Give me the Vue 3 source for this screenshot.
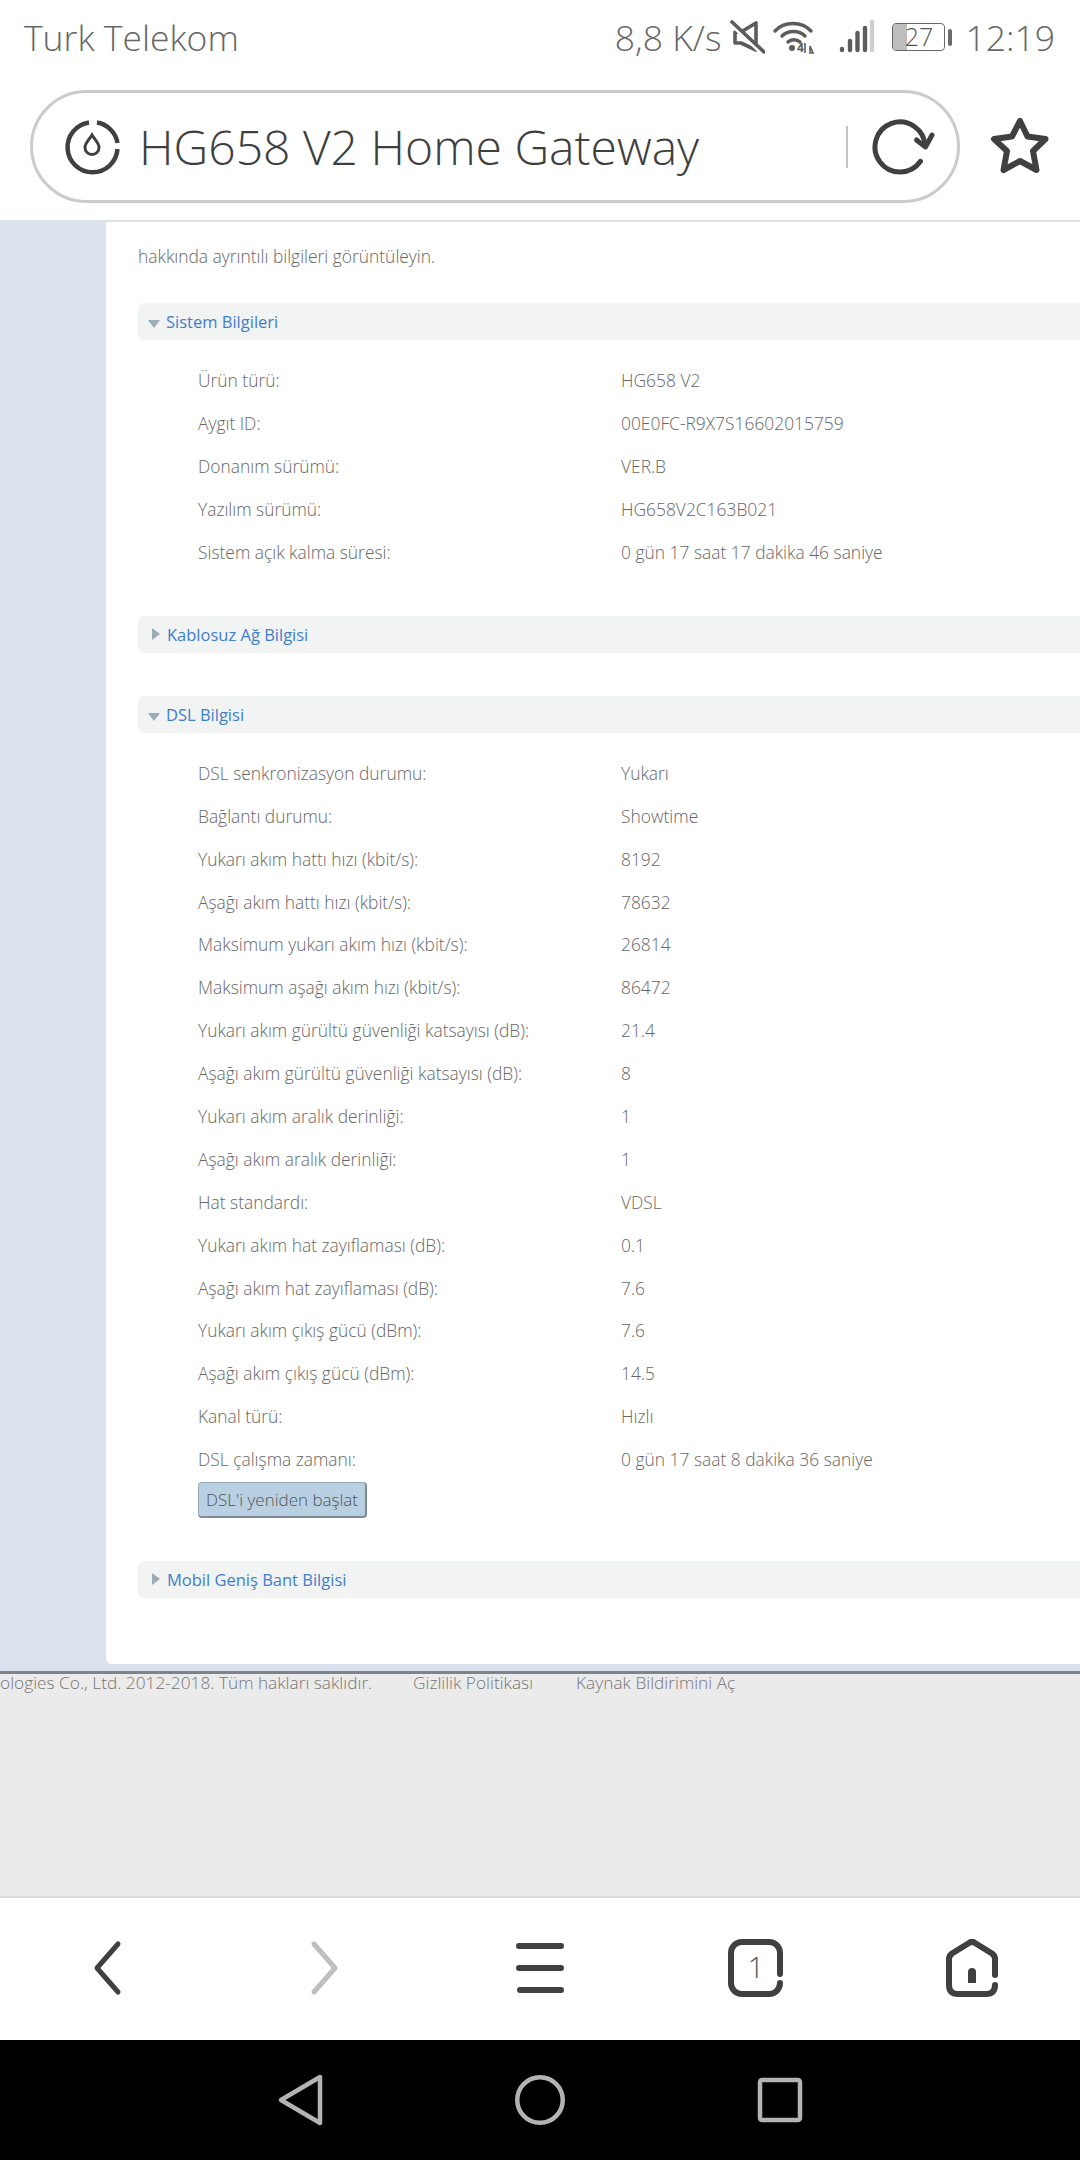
<template>
  <div class="phone">
    <div class="status-bar">
      <span class="carrier">Turk Telekom</span>
      <div class="status-right">
        <span class="speed">8,8 K/s</span>
        <svg class="ico-mute" width="36" height="36" viewBox="0 0 36 36" fill="none" stroke="#5c5c5c" stroke-width="3.6">
          <path d="M6 13h6l15-9v27L12 24H6z" stroke-linejoin="round" />
          <path d="M0 4l32 30" stroke="#fff" stroke-width="3" />
          <path d="M3 3l32 30" stroke-linecap="round" />
        </svg>
        <svg class="ico-wifi" width="42" height="34" viewBox="0 0 42 34" fill="none" stroke="#5c5c5c" stroke-width="3.4" stroke-linecap="round">
          <path d="M3 11C12 1 30 1 39 11" />
          <path d="M10 16c6-6 17-6 23 0" />
          <path d="M16 22c3-3 9-3 12 0" />
          <circle cx="20" cy="28" r="3" fill="#5c5c5c" stroke="none" />
          <text x="25" y="32" class="wifi-four">4</text>
          <path d="M33 23v10M38 26l3 7h-3z" stroke-width="1.6" stroke-linecap="butt" />
        </svg>
        <svg class="ico-signal" width="36" height="34" viewBox="0 0 36 34" stroke-linecap="round" stroke-width="4.4" fill="none">
          <path d="M3 30v-1" stroke="#5c5c5c" />
          <path d="M11 30v-9" stroke="#5c5c5c" />
          <path d="M18.5 30V13" stroke="#5c5c5c" />
          <path d="M26 30V8" stroke="#5c5c5c" />
          <path d="M33 30V2" stroke="#cfcfcf" />
        </svg>
        <div class="battery">
          <div class="battery-body">
            <div class="battery-fill" :style="{ width: batteryLevel + '%' }"></div>
            <span class="battery-text">{{ batteryLevel }}</span>
          </div>
          <div class="battery-nub"></div>
        </div>
        <span class="clock">12:19</span>
      </div>
    </div>

    <div class="url-row">
      <div class="url-pill">
        <svg class="ico-drop" width="60" height="60" viewBox="0 0 60 60" fill="none" stroke="#404040">
          <path d="M34 5.5A25 25 0 0 1 54.500 26" stroke-width="4.5" />
          <path d="M26 5.5A25 25 0 1 0 54.500 32" stroke-width="4.5" />
          <path d="M29 18c-3 5-7 8-7 12.500a7 7 0 0 0 14 0C36 26 32 23 29 18z" stroke-width="3" />
        </svg>
        <span class="url-title">HG658 V2 Home Gateway</span>
        <div class="url-divider"></div>
        <svg class="ico-reload" width="66" height="60" viewBox="0 0 66 60" fill="none" stroke="#404040" stroke-width="5" stroke-linecap="round" stroke-linejoin="round">
          <path d="M53 29A25 25 0 1 0 48.500 44.300" />
          <path d="M60 18l-6.500 12-9-7" />
        </svg>
      </div>
      <svg class="ico-star" width="60" height="60" viewBox="0 0 60 60" fill="none" stroke="#404040" stroke-width="6" stroke-linejoin="round">
        <path d="M30 5l7.500 15.500 18 2.500L43 35l3.500 19L30 45l-16.500 9L17 35 4 23l18-2.500z" />
      </svg>
    </div>

    <div class="page">
      <div class="sidebar"></div>
      <div class="panel">
        <p class="intro">hakkında ayrıntılı bilgileri görüntüleyin.</p>

        <section v-for="section in sections" :key="section.title" class="section">
          <div class="section-head">
            <span class="caret" :class="section.rows ? 'caret-open' : 'caret-closed'"></span>
            <span class="section-title">{{ section.title }}</span>
          </div>
          <div v-if="section.rows" class="rows">
            <div v-for="row in section.rows" :key="row[0]" class="row">
              <span>{{ row[0] }}</span>
              <span>{{ row[1] }}</span>
            </div>
            <button v-if="section.action" class="action-btn">{{ section.action }}</button>
          </div>
        </section>
      </div>
    </div>

    <div class="footer">
      <span class="copyright">ologies Co., Ltd. 2012-2018. Tüm hakları saklıdır.</span>
      <span class="privacy">Gizlilik Politikası</span>
      <span class="source">Kaynak Bildirimini Aç</span>
    </div>

    <div class="toolbar">
      <svg width="30" height="56" viewBox="0 0 30 56" fill="none" stroke="#404040" stroke-width="5" stroke-linecap="round" stroke-linejoin="round">
        <path d="M25 4L4 28l21 24" />
      </svg>
      <svg width="30" height="56" viewBox="0 0 30 56" fill="none" stroke="#bfbfbf" stroke-width="5" stroke-linecap="round" stroke-linejoin="round">
        <path d="M5 4l21 24L5 52" />
      </svg>
      <svg width="48" height="56" viewBox="0 0 48 56" fill="none" stroke="#404040" stroke-width="6" stroke-linecap="round">
        <path d="M3 6h42M3 28h42M4 50h41" />
      </svg>
      <div class="tab-icon">
        <svg width="56" height="58" viewBox="0 0 56 58" fill="none" stroke="#404040" stroke-width="6" stroke-linecap="round">
          <path d="M52 35V14a11 11 0 0 0-11-11H14A11 11 0 0 0 3 14v30a11 11 0 0 0 11 11h27a11 11 0 0 0 11-11" />
        </svg>
        <span class="tab-count">1</span>
      </div>
      <svg width="54" height="58" viewBox="0 0 54 58" fill="none" stroke="#404040" stroke-width="6" stroke-linecap="round" stroke-linejoin="round">
        <path d="M50 36V20c0-3-1-4-3-5.500L30 4c-2-1.500-4-1.500-6 0L7 14.500C5 16 4 17 4 20v26c0 6 3 9 9 9h28c6 0 9-3 9-9" />
        <path d="M23 44V33a4 4 0 0 1 8 0v11z" fill="#404040" stroke="none" />
      </svg>
    </div>

    <div class="nav-bar">
      <svg width="48" height="54" viewBox="0 0 48 54" fill="none" stroke="#b3b3b3" stroke-width="4.5" stroke-linejoin="round">
        <path d="M5 27L44 4v46z" />
      </svg>
      <svg width="54" height="54" viewBox="0 0 54 54" fill="none" stroke="#b3b3b3" stroke-width="4.5">
        <circle cx="27" cy="27" r="22.750" />
      </svg>
      <svg width="48" height="48" viewBox="0 0 48 48" fill="none" stroke="#b3b3b3" stroke-width="4.5" stroke-linejoin="round">
        <rect x="4" y="4" width="40" height="40" rx="2" />
      </svg>
    </div>
  </div>
</template>

<script setup>
const batteryLevel = 27;

const sections = [
  {
    title: "Sistem Bilgileri",
    rows: [
      ["Ürün türü:", "HG658 V2"],
      ["Aygıt ID:", "00E0FC-R9X7S16602015759"],
      ["Donanım sürümü:", "VER.B"],
      ["Yazılım sürümü:", "HG658V2C163B021"],
      ["Sistem açık kalma süresi:", "0 gün 17 saat 17 dakika 46 saniye"]
    ]
  },
  { title: "Kablosuz Ağ Bilgisi" },
  {
    title: "DSL Bilgisi",
    action: "DSL'i yeniden başlat",
    rows: [
      ["DSL senkronizasyon durumu:", "Yukarı"],
      ["Bağlantı durumu:", "Showtime"],
      ["Yukarı akım hattı hızı (kbit/s):", "8192"],
      ["Aşağı akım hattı hızı (kbit/s):", "78632"],
      ["Maksimum yukarı akım hızı (kbit/s):", "26814"],
      ["Maksimum aşağı akım hızı (kbit/s):", "86472"],
      ["Yukarı akım gürültü güvenliği katsayısı (dB):", "21.4"],
      ["Aşağı akım gürültü güvenliği katsayısı (dB):", "8"],
      ["Yukarı akım aralık derinliği:", "1"],
      ["Aşağı akım aralık derinliği:", "1"],
      ["Hat standardı:", "VDSL"],
      ["Yukarı akım hat zayıflaması (dB):", "0.1"],
      ["Aşağı akım hat zayıflaması (dB):", "7.6"],
      ["Yukarı akım çıkış gücü (dBm):", "7.6"],
      ["Aşağı akım çıkış gücü (dBm):", "14.5"],
      ["Kanal türü:", "Hızlı"],
      ["DSL çalışma zamanı:", "0 gün 17 saat 8 dakika 36 saniye"]
    ]
  },
  { title: "Mobil Geniş Bant Bilgisi" }
];
</script>

<style>
html,
body {
  margin: 0;
  overflow: hidden;
}
</style>

<style scoped>
.phone {
  width: 1080px;
  height: 2160px;
  display: flex;
  flex-direction: column;
  overflow: hidden;
  background: #fff;
  font-family: "Open Sans", "Noto Sans", sans-serif;
  font-weight: 300;
}
.status-bar {
  height: 76px;
  flex: none;
  box-sizing: border-box;
  display: flex;
  align-items: center;
  justify-content: space-between;
  padding: 0 25px 2px 24px;
  font-size: 35.5px;
  color: #666;
}
.status-right {
  display: flex;
  align-items: center;
}
.ico-mute {
  margin-left: 8px;
}
.ico-wifi {
  margin-left: 7px;
}
.wifi-four {
  font-size: 12px;
  font-weight: 700;
  fill: #5c5c5c;
  stroke: none;
}
.ico-signal {
  margin-left: 25px;
}
.battery {
  display: flex;
  align-items: center;
  margin-left: 17px;
}
.battery-body {
  position: relative;
  width: 53px;
  height: 28px;
  box-sizing: border-box;
  border: 1.5px solid #6a6a6a;
  border-radius: 4px;
}
.battery-fill {
  height: 100%;
  border-radius: 3px 0 0 3px;
  background: #bdbdbd;
}
.battery-text {
  position: absolute;
  inset: 0;
  text-align: center;
  font-size: 25px;
  line-height: 25px;
  color: #555;
}
.battery-nub {
  width: 4px;
  height: 17px;
  margin-left: 3px;
  border-radius: 2px;
  background: #6a6a6a;
}
.clock {
  margin-left: 13px;
}
.url-row {
  height: 146px;
  flex: none;
  box-sizing: border-box;
  border-bottom: 2px solid #e0e0e0;
  display: flex;
  align-items: flex-start;
  padding: 14px 0 0 30px;
}
.url-pill {
  width: 930px;
  height: 113px;
  flex: none;
  box-sizing: border-box;
  border: 3px solid #cbcbcb;
  border-radius: 57px;
  display: flex;
  align-items: center;
  padding-left: 30px;
}
.url-title {
  margin-left: 16px;
  width: 707px;
  font-size: 48px;
  color: #3f3f3f;
  white-space: nowrap;
}
.url-divider {
  width: 2px;
  height: 42px;
  background: #c4c4c4;
}
.ico-reload {
  margin-left: 24px;
}
.ico-star {
  margin: 26px 0 0 30px;
}
.page {
  height: 1452px;
  flex: none;
  display: flex;
  background: #d9e2ed;
  box-sizing: border-box;
  border-bottom: 3px solid #7d838a;
}
.sidebar {
  width: 106px;
  flex: none;
}
.panel {
  flex: 1;
  height: 1442px;
  background: #fff;
  border-radius: 0 0 0 6px;
  box-sizing: border-box;
  padding-left: 32px;
  font-size: 17.4px;
  color: #666;
}
.intro {
  margin: 0;
  height: 81px;
  line-height: 68px;
}
.section {
  margin-bottom: 43px;
}
.section-head {
  height: 37px;
  display: flex;
  align-items: center;
  background: #f2f3f3;
  border-radius: 6px 0 0 6px;
}
.section-title {
  color: #3e7fcc;
  font-size: 16.5px;
  font-weight: 400;
}
.caret {
  width: 0;
  height: 0;
}
.caret-open {
  border-left: 6.5px solid transparent;
  border-right: 6.5px solid transparent;
  border-top: 8px solid #9aacb8;
  margin: 5px 6px 0 10px;
}
.caret-closed {
  border-top: 6.5px solid transparent;
  border-bottom: 6.5px solid transparent;
  border-left: 8px solid #9aacb8;
  margin: 0 7px 0 14px;
}
.rows {
  padding: 18.5px 0 0 60px;
}
.row {
  height: 42.9px;
  display: grid;
  grid-template-columns: 423px 1fr;
  align-items: center;
  white-space: nowrap;
}
.action-btn {
  display: block;
  width: 169px;
  height: 36px;
  margin: 1px 0;
  padding: 0;
  border: 1px solid #98a8b5;
  border-right: 2px solid #7f8a94;
  border-bottom: 2px solid #7f8a94;
  border-radius: 4px;
  background: #b8d0e2;
  color: #555;
  font-family: inherit;
  font-size: 17px;
  font-weight: 300;
}
.footer {
  flex: 1;
  background: #ebebeb;
  display: flex;
  align-items: flex-start;
  font-size: 17.3px;
  line-height: 18px;
  color: #777;
  white-space: nowrap;
}
.copyright {
  width: 365px;
  flex: none;
  text-align: right;
}
.privacy {
  margin-left: 48px;
}
.source {
  margin-left: 43px;
}
.toolbar {
  height: 144px;
  flex: none;
  box-sizing: border-box;
  border-top: 2px solid #dcdcdc;
  padding-bottom: 2px;
  background: #fff;
  display: grid;
  grid-template-columns: repeat(5, 216px);
  justify-items: center;
  align-items: center;
}
.tab-icon {
  position: relative;
  width: 56px;
  height: 58px;
}
.tab-count {
  position: absolute;
  inset: 0;
  text-align: center;
  font-size: 29px;
  line-height: 56px;
  color: #555;
}
.nav-bar {
  height: 120px;
  flex: none;
  box-sizing: border-box;
  padding-left: 180px;
  background: #000;
  display: grid;
  grid-template-columns: repeat(3, 240px);
  justify-items: center;
  align-items: center;
}
</style>
